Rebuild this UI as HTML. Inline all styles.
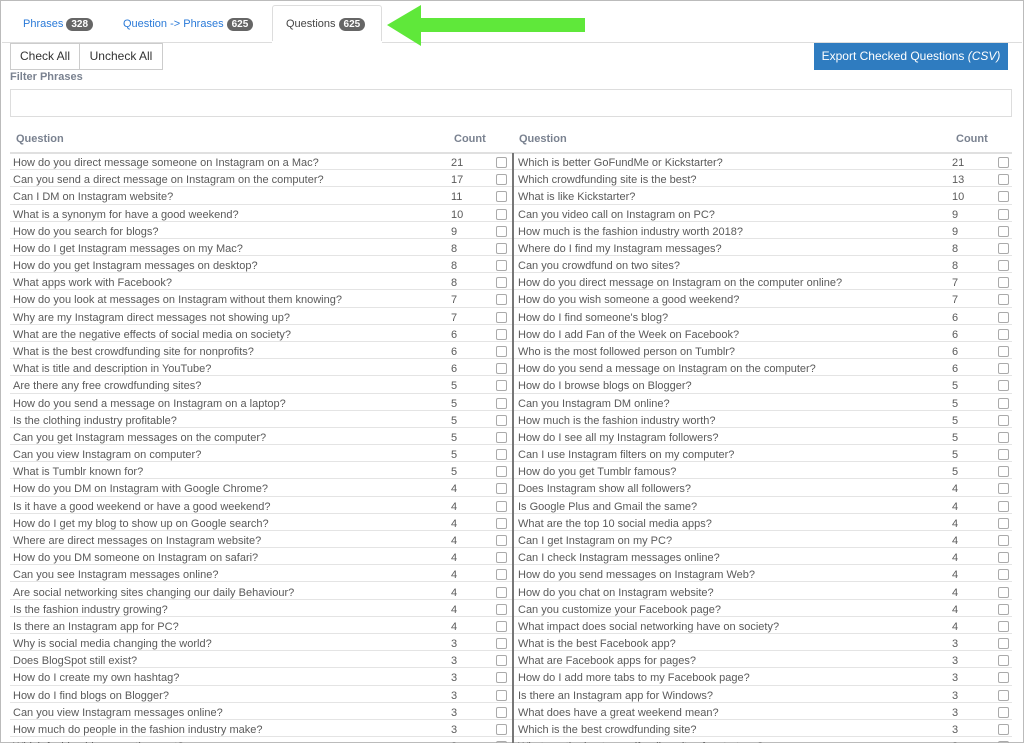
<!DOCTYPE html>
<html style="overflow:hidden;height:743px"><head><meta charset="utf-8"><style>
*{box-sizing:border-box;margin:0;padding:0}
body{width:1024px;height:743px;overflow:hidden;background:#fff;font-family:"Liberation Sans",sans-serif;position:relative;border:1px solid #bbb}
.a{position:absolute;white-space:nowrap}
.tab{font-size:11px;color:#2a7ad8;top:17px}
.badge{display:inline-block;background:#666;color:#fff;font-size:10px;font-weight:bold;border-radius:8px;padding:1px 5px;margin-left:3px}
.btn{position:absolute;border:1px solid #ccc;font-size:12px;color:#333;top:42px;height:27px;line-height:25px;text-align:center;background:#fff}
.hd{font-size:11px;font-weight:bold;color:#7a8290;top:132px}
.row{position:absolute;height:17.18px;border-bottom:1px solid #e4e4e4;font-size:11px;color:#5a5a5a;line-height:17px}
.row span{position:absolute;top:2px}
.cb{position:absolute;top:4px;width:11px;height:11px;border:1px solid #aaa;border-radius:2px}
</style></head><body>
<div class="a" style="left:271px;top:4px;width:110px;height:38px;border:1px solid #ddd;border-bottom:none;background:#fff;border-radius:3px 3px 0 0"></div>
<div class="a" style="left:1px;right:1px;top:41px;height:1px;background:#ddd"></div>
<div class="a" style="left:271px;top:40px;width:110px;height:2px;background:#fff"></div>
<div class="a tab" style="left:22px">Phrases<span class="badge">328</span></div>
<div class="a tab" style="left:122px">Question -&gt; Phrases<span class="badge">625</span></div>
<div class="a tab" style="left:285px;color:#444">Questions<span class="badge">625</span></div>
<svg class="a" style="left:384px;top:3px" width="204" height="44"><polygon points="2,21 36,1 36,14 200,14 200,28 36,28 36,42" fill="#5fe83a"/></svg>
<div class="btn" style="left:9px;width:70px">Check All</div>
<div class="btn" style="left:78px;width:84px">Uncheck All</div>
<div class="a" style="left:813px;top:42px;width:194px;height:27px;background:#2f7cc0;color:#fff;font-size:12px;line-height:27px;text-align:center">Export Checked Questions <i>(CSV)</i></div>
<div class="a" style="left:9px;top:70px;font-size:11px;font-weight:bold;color:#7a8290">Filter Phrases</div>
<div class="a" style="left:9px;top:88px;width:1002px;height:28px;border:1px solid #ddd"></div>
<div class="a hd" style="left:15px">Question</div>
<div class="a hd" style="left:453px">Count</div>
<div class="a hd" style="left:518px">Question</div>
<div class="a hd" style="left:955px">Count</div>
<div class="a" style="left:9px;top:151px;width:1002px;height:2px;background:#e0e0e0"></div>
<div class="a" style="left:511px;top:152px;width:2px;height:591px;background:#777"></div>
<div class="a" style="left:9px;top:152px;width:502px">
<div class="row" style="top:0;width:100%"><span style="left:3px">How do you direct message someone on Instagram on a Mac?</span><span style="left:441px">21</span><i class="cb" style="left:486px"></i></div>
<div class="row" style="top:17.18px;width:100%"><span style="left:3px">Can you send a direct message on Instagram on the computer?</span><span style="left:441px">17</span><i class="cb" style="left:486px"></i></div>
<div class="row" style="top:34.36px;width:100%"><span style="left:3px">Can I DM on Instagram website?</span><span style="left:441px">11</span><i class="cb" style="left:486px"></i></div>
<div class="row" style="top:51.54px;width:100%"><span style="left:3px">What is a synonym for have a good weekend?</span><span style="left:441px">10</span><i class="cb" style="left:486px"></i></div>
<div class="row" style="top:68.72px;width:100%"><span style="left:3px">How do you search for blogs?</span><span style="left:441px">9</span><i class="cb" style="left:486px"></i></div>
<div class="row" style="top:85.9px;width:100%"><span style="left:3px">How do I get Instagram messages on my Mac?</span><span style="left:441px">8</span><i class="cb" style="left:486px"></i></div>
<div class="row" style="top:103.08px;width:100%"><span style="left:3px">How do you get Instagram messages on desktop?</span><span style="left:441px">8</span><i class="cb" style="left:486px"></i></div>
<div class="row" style="top:120.26px;width:100%"><span style="left:3px">What apps work with Facebook?</span><span style="left:441px">8</span><i class="cb" style="left:486px"></i></div>
<div class="row" style="top:137.44px;width:100%"><span style="left:3px">How do you look at messages on Instagram without them knowing?</span><span style="left:441px">7</span><i class="cb" style="left:486px"></i></div>
<div class="row" style="top:154.62px;width:100%"><span style="left:3px">Why are my Instagram direct messages not showing up?</span><span style="left:441px">7</span><i class="cb" style="left:486px"></i></div>
<div class="row" style="top:171.8px;width:100%"><span style="left:3px">What are the negative effects of social media on society?</span><span style="left:441px">6</span><i class="cb" style="left:486px"></i></div>
<div class="row" style="top:188.98px;width:100%"><span style="left:3px">What is the best crowdfunding site for nonprofits?</span><span style="left:441px">6</span><i class="cb" style="left:486px"></i></div>
<div class="row" style="top:206.16px;width:100%"><span style="left:3px">What is title and description in YouTube?</span><span style="left:441px">6</span><i class="cb" style="left:486px"></i></div>
<div class="row" style="top:223.34px;width:100%"><span style="left:3px">Are there any free crowdfunding sites?</span><span style="left:441px">5</span><i class="cb" style="left:486px"></i></div>
<div class="row" style="top:240.52px;width:100%"><span style="left:3px">How do you send a message on Instagram on a laptop?</span><span style="left:441px">5</span><i class="cb" style="left:486px"></i></div>
<div class="row" style="top:257.7px;width:100%"><span style="left:3px">Is the clothing industry profitable?</span><span style="left:441px">5</span><i class="cb" style="left:486px"></i></div>
<div class="row" style="top:274.88px;width:100%"><span style="left:3px">Can you get Instagram messages on the computer?</span><span style="left:441px">5</span><i class="cb" style="left:486px"></i></div>
<div class="row" style="top:292.06px;width:100%"><span style="left:3px">Can you view Instagram on computer?</span><span style="left:441px">5</span><i class="cb" style="left:486px"></i></div>
<div class="row" style="top:309.24px;width:100%"><span style="left:3px">What is Tumblr known for?</span><span style="left:441px">5</span><i class="cb" style="left:486px"></i></div>
<div class="row" style="top:326.42px;width:100%"><span style="left:3px">How do you DM on Instagram with Google Chrome?</span><span style="left:441px">4</span><i class="cb" style="left:486px"></i></div>
<div class="row" style="top:343.6px;width:100%"><span style="left:3px">Is it have a good weekend or have a good weekend?</span><span style="left:441px">4</span><i class="cb" style="left:486px"></i></div>
<div class="row" style="top:360.78px;width:100%"><span style="left:3px">How do I get my blog to show up on Google search?</span><span style="left:441px">4</span><i class="cb" style="left:486px"></i></div>
<div class="row" style="top:377.96px;width:100%"><span style="left:3px">Where are direct messages on Instagram website?</span><span style="left:441px">4</span><i class="cb" style="left:486px"></i></div>
<div class="row" style="top:395.14px;width:100%"><span style="left:3px">How do you DM someone on Instagram on safari?</span><span style="left:441px">4</span><i class="cb" style="left:486px"></i></div>
<div class="row" style="top:412.32px;width:100%"><span style="left:3px">Can you see Instagram messages online?</span><span style="left:441px">4</span><i class="cb" style="left:486px"></i></div>
<div class="row" style="top:429.5px;width:100%"><span style="left:3px">Are social networking sites changing our daily Behaviour?</span><span style="left:441px">4</span><i class="cb" style="left:486px"></i></div>
<div class="row" style="top:446.68px;width:100%"><span style="left:3px">Is the fashion industry growing?</span><span style="left:441px">4</span><i class="cb" style="left:486px"></i></div>
<div class="row" style="top:463.86px;width:100%"><span style="left:3px">Is there an Instagram app for PC?</span><span style="left:441px">4</span><i class="cb" style="left:486px"></i></div>
<div class="row" style="top:481.04px;width:100%"><span style="left:3px">Why is social media changing the world?</span><span style="left:441px">3</span><i class="cb" style="left:486px"></i></div>
<div class="row" style="top:498.22px;width:100%"><span style="left:3px">Does BlogSpot still exist?</span><span style="left:441px">3</span><i class="cb" style="left:486px"></i></div>
<div class="row" style="top:515.4px;width:100%"><span style="left:3px">How do I create my own hashtag?</span><span style="left:441px">3</span><i class="cb" style="left:486px"></i></div>
<div class="row" style="top:532.58px;width:100%"><span style="left:3px">How do I find blogs on Blogger?</span><span style="left:441px">3</span><i class="cb" style="left:486px"></i></div>
<div class="row" style="top:549.76px;width:100%"><span style="left:3px">Can you view Instagram messages online?</span><span style="left:441px">3</span><i class="cb" style="left:486px"></i></div>
<div class="row" style="top:566.94px;width:100%"><span style="left:3px">How much do people in the fashion industry make?</span><span style="left:441px">3</span><i class="cb" style="left:486px"></i></div>
<div class="row" style="top:584.12px;width:100%"><span style="left:3px">Which fashion blog pays the most?</span><span style="left:441px">3</span><i class="cb" style="left:486px"></i></div>
</div>
<div class="a" style="left:513px;top:152px;width:498px">
<div class="row" style="top:0;width:100%"><span style="left:4px">Which is better GoFundMe or Kickstarter?</span><span style="left:438px">21</span><i class="cb" style="left:484px"></i></div>
<div class="row" style="top:17.18px;width:100%"><span style="left:4px">Which crowdfunding site is the best?</span><span style="left:438px">13</span><i class="cb" style="left:484px"></i></div>
<div class="row" style="top:34.36px;width:100%"><span style="left:4px">What is like Kickstarter?</span><span style="left:438px">10</span><i class="cb" style="left:484px"></i></div>
<div class="row" style="top:51.54px;width:100%"><span style="left:4px">Can you video call on Instagram on PC?</span><span style="left:438px">9</span><i class="cb" style="left:484px"></i></div>
<div class="row" style="top:68.72px;width:100%"><span style="left:4px">How much is the fashion industry worth 2018?</span><span style="left:438px">9</span><i class="cb" style="left:484px"></i></div>
<div class="row" style="top:85.9px;width:100%"><span style="left:4px">Where do I find my Instagram messages?</span><span style="left:438px">8</span><i class="cb" style="left:484px"></i></div>
<div class="row" style="top:103.08px;width:100%"><span style="left:4px">Can you crowdfund on two sites?</span><span style="left:438px">8</span><i class="cb" style="left:484px"></i></div>
<div class="row" style="top:120.26px;width:100%"><span style="left:4px">How do you direct message on Instagram on the computer online?</span><span style="left:438px">7</span><i class="cb" style="left:484px"></i></div>
<div class="row" style="top:137.44px;width:100%"><span style="left:4px">How do you wish someone a good weekend?</span><span style="left:438px">7</span><i class="cb" style="left:484px"></i></div>
<div class="row" style="top:154.62px;width:100%"><span style="left:4px">How do I find someone's blog?</span><span style="left:438px">6</span><i class="cb" style="left:484px"></i></div>
<div class="row" style="top:171.8px;width:100%"><span style="left:4px">How do I add Fan of the Week on Facebook?</span><span style="left:438px">6</span><i class="cb" style="left:484px"></i></div>
<div class="row" style="top:188.98px;width:100%"><span style="left:4px">Who is the most followed person on Tumblr?</span><span style="left:438px">6</span><i class="cb" style="left:484px"></i></div>
<div class="row" style="top:206.16px;width:100%"><span style="left:4px">How do you send a message on Instagram on the computer?</span><span style="left:438px">6</span><i class="cb" style="left:484px"></i></div>
<div class="row" style="top:223.34px;width:100%"><span style="left:4px">How do I browse blogs on Blogger?</span><span style="left:438px">5</span><i class="cb" style="left:484px"></i></div>
<div class="row" style="top:240.52px;width:100%"><span style="left:4px">Can you Instagram DM online?</span><span style="left:438px">5</span><i class="cb" style="left:484px"></i></div>
<div class="row" style="top:257.7px;width:100%"><span style="left:4px">How much is the fashion industry worth?</span><span style="left:438px">5</span><i class="cb" style="left:484px"></i></div>
<div class="row" style="top:274.88px;width:100%"><span style="left:4px">How do I see all my Instagram followers?</span><span style="left:438px">5</span><i class="cb" style="left:484px"></i></div>
<div class="row" style="top:292.06px;width:100%"><span style="left:4px">Can I use Instagram filters on my computer?</span><span style="left:438px">5</span><i class="cb" style="left:484px"></i></div>
<div class="row" style="top:309.24px;width:100%"><span style="left:4px">How do you get Tumblr famous?</span><span style="left:438px">5</span><i class="cb" style="left:484px"></i></div>
<div class="row" style="top:326.42px;width:100%"><span style="left:4px">Does Instagram show all followers?</span><span style="left:438px">4</span><i class="cb" style="left:484px"></i></div>
<div class="row" style="top:343.6px;width:100%"><span style="left:4px">Is Google Plus and Gmail the same?</span><span style="left:438px">4</span><i class="cb" style="left:484px"></i></div>
<div class="row" style="top:360.78px;width:100%"><span style="left:4px">What are the top 10 social media apps?</span><span style="left:438px">4</span><i class="cb" style="left:484px"></i></div>
<div class="row" style="top:377.96px;width:100%"><span style="left:4px">Can I get Instagram on my PC?</span><span style="left:438px">4</span><i class="cb" style="left:484px"></i></div>
<div class="row" style="top:395.14px;width:100%"><span style="left:4px">Can I check Instagram messages online?</span><span style="left:438px">4</span><i class="cb" style="left:484px"></i></div>
<div class="row" style="top:412.32px;width:100%"><span style="left:4px">How do you send messages on Instagram Web?</span><span style="left:438px">4</span><i class="cb" style="left:484px"></i></div>
<div class="row" style="top:429.5px;width:100%"><span style="left:4px">How do you chat on Instagram website?</span><span style="left:438px">4</span><i class="cb" style="left:484px"></i></div>
<div class="row" style="top:446.68px;width:100%"><span style="left:4px">Can you customize your Facebook page?</span><span style="left:438px">4</span><i class="cb" style="left:484px"></i></div>
<div class="row" style="top:463.86px;width:100%"><span style="left:4px">What impact does social networking have on society?</span><span style="left:438px">4</span><i class="cb" style="left:484px"></i></div>
<div class="row" style="top:481.04px;width:100%"><span style="left:4px">What is the best Facebook app?</span><span style="left:438px">3</span><i class="cb" style="left:484px"></i></div>
<div class="row" style="top:498.22px;width:100%"><span style="left:4px">What are Facebook apps for pages?</span><span style="left:438px">3</span><i class="cb" style="left:484px"></i></div>
<div class="row" style="top:515.4px;width:100%"><span style="left:4px">How do I add more tabs to my Facebook page?</span><span style="left:438px">3</span><i class="cb" style="left:484px"></i></div>
<div class="row" style="top:532.58px;width:100%"><span style="left:4px">Is there an Instagram app for Windows?</span><span style="left:438px">3</span><i class="cb" style="left:484px"></i></div>
<div class="row" style="top:549.76px;width:100%"><span style="left:4px">What does have a great weekend mean?</span><span style="left:438px">3</span><i class="cb" style="left:484px"></i></div>
<div class="row" style="top:566.94px;width:100%"><span style="left:4px">Which is the best crowdfunding site?</span><span style="left:438px">3</span><i class="cb" style="left:484px"></i></div>
<div class="row" style="top:584.12px;width:100%"><span style="left:4px">What are the best crowdfunding sites for startups?</span><span style="left:438px">3</span><i class="cb" style="left:484px"></i></div>
</div>
</body></html>
